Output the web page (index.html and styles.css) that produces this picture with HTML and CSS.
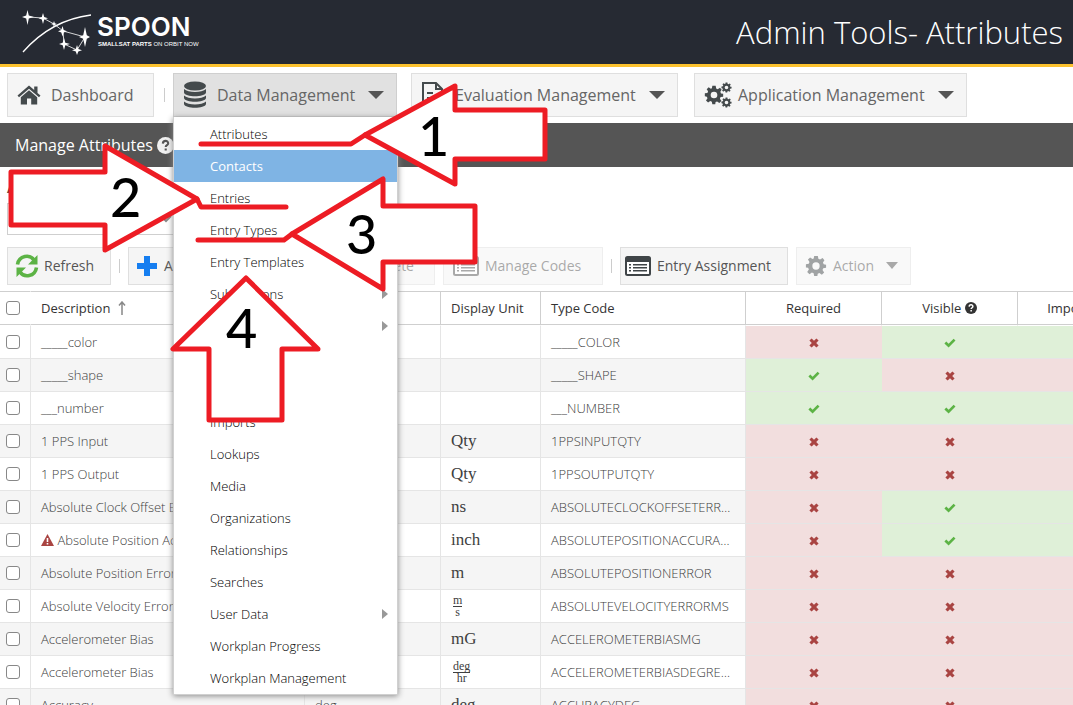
FILE: index.html
```html
<!DOCTYPE html>
<html lang="en">
<head>
<meta charset="utf-8">
<title>Admin Tools- Attributes</title>
<link rel="stylesheet" href="styles.css">
</head>
<body>
<svg class="sprite" aria-hidden="true">
  <symbol id="yes" viewBox="0 0 12 10"><path d="M.4 5.400 2.300 3.500 4.600 5.700 9.600.7 11.500 2.600 4.600 9.400z" fill="#5cb345"/></symbol>
  <symbol id="no" viewBox="0 0 10 10"><path d="M2.600.4 5 2.800 7.400.4 9.600 2.600 7.200 5l2.400 2.400-2.200 2.200L5 7.200 2.600 9.600.4 7.400 2.800 5 .4 2.600z" fill="#a94442"/></symbol>
  <symbol id="list" viewBox="0 0 26 20"><rect x="1" y="1" width="24" height="18" rx="1.5" fill="#fff" stroke="currentColor" stroke-width="2"/><path d="M1 1h24v5H1zM4 8h2v1.5H4zM8 8h14v1.5H8zM4 11h2v1.5H4zM8 11h14v1.5H8zM4 14h2v1.5H4zM8 14h14v1.5H8z" fill="currentColor"/></symbol>
  <symbol id="gear" viewBox="0 0 24 24"><path fill="currentColor" fill-rule="evenodd" d="M10 1h4l.6 3.2 1.8.8L19.200 3.200l2 2.400-1.600 2.600.8 1.900L23 10.500v3.500l-3.100.5-.8 1.900 1.800 2.700-2.500 2.400-2.700-1.800-1.800.8L13.500 23h-3.500l-.6-3-1.900-.8-2.600 1.800-2.500-2.400 1.800-2.700-.8-1.900L1 13.500V10l3.100-.5.8-1.900-1.700-2.600 2.400-2.400L8.200 4.400l1.300-.6zM12 8a4 4 0 1 0 0 8 4 4 0 0 0 0-8z"/></symbol>
  <symbol id="help" viewBox="0 0 16 16"><circle cx="8" cy="8" r="8" fill="currentColor"/><path d="M5.500 6.200C5.700 2.800 10.600 3 10.500 6c0 1.600-2.300 1.700-2.300 3.400M8.200 10.800v2" fill="none" stroke="var(--mark)" stroke-width="2"/></symbol>
</svg>
<div class="app">
  <header class="masthead">
    <svg class="logo" viewBox="0 0 180 48" role="img" aria-label="SPOON">
      <g fill="none" stroke="#fff"><path d="M3 44Q31 12 71 7" stroke-width="1.300"/><path d="M8 9l15 1 11 6 9 7 22 6-8 13-13-6-1-13" stroke-width=".8"/></g>
      <g fill="#fff"><path d="m7.500 2 1.300 5.500L14 9l-5.200 1.500L7.500 17l-1.300-6.500L2 9l4.200-1.500z"/><path d="m23 5 1.200 4L28 10.200l-3.800 1.300L23 16l-1.200-4.500-3.300-1.300L21.800 9z"/><path d="m34 13 .8 2.200 2.200.8-2.200.8L34 19l-.8-2.200-2.200-.8 2.200-.8z"/><path d="m42.500 18 1.200 4 3.300 1.200-3.300 1.200-1.200 4-1.200-4-3.300-1.200 3.300-1.200z"/><path d="m65 19 1.800 8.200L70 29l-3.200 1.800L65 39l-1.800-8.200L59 29l4.200-1.800z"/><path d="m44 30 1.300 4.800L50 36l-4.700 1.300L44 42l-1.300-4.700L39 36l3.700-1.200z"/><path d="m57 37 1.300 4 3.700 1.200-3.700 1.200L57 47l-1.200-3.600-3.800-1.200 3.800-1.200z"/></g>
      <text class="logo-name" x="77" y="28">SPOON</text>
      <text class="logo-tag" x="78" y="38"><tspan class="strong">SMALLSAT PARTS</tspan> ON ORBIT NOW</text>
    </svg>
    <h1 class="page-title">Admin Tools- Attributes</h1>
  </header>

  <nav class="nav">
    <button class="btn nav-home"><svg width="24" height="22" viewBox="0 0 24 22"><path d="M12 1.500 0.500 11.500 2 13.200 12 4.800l10 8.400 1.500-1.700L20.500 9V2.500h-3.300v3.400z" fill="#444a4c"/><path d="M3.800 13.200 12 6.300l8.200 6.900V20.500h-6v-6H10v6H3.800z" fill="#444a4c"/></svg>Dashboard</button>
    <span class="sep"></span>
    <div class="dropdown">
      <button class="btn nav-data pressed"><svg width="24" height="28" viewBox="0 0 24 28" fill="#444a4c"><ellipse cx="12" cy="5" rx="11" ry="4.500"/><path d="M1 8c4 4 18 4 22 0v3.500c-1 5-21 5-22 0zM1 14.500c4 4 18 4 22 0V17c-1 5-21 5-22 0zM1 20.500c4 4 18 4 22 0V23c-1 5-21 5-22 0z"/></svg>Data Management<i class="caret"></i></button>
      <ul class="menu">
        <li><a href="#">Attributes</a></li>
        <li><a href="#" class="active">Contacts</a></li>
        <li><a href="#">Entries</a></li>
        <li><a href="#">Entry Types</a></li>
        <li><a href="#">Entry Templates</a></li>
        <li class="more"><a href="#">Submissions</a></li>
        <li class="more"></li>
        <li></li>
        <li></li>
        <li><a href="#">Imports</a></li>
        <li><a href="#">Lookups</a></li>
        <li><a href="#">Media</a></li>
        <li><a href="#">Organizations</a></li>
        <li><a href="#">Relationships</a></li>
        <li><a href="#">Searches</a></li>
        <li class="more"><a href="#">User Data</a></li>
        <li><a href="#">Workplan Progress</a></li>
        <li><a href="#">Workplan Management</a></li>
      </ul>
    </div>
    <button class="btn nav-eval"><svg width="24" height="28" viewBox="0 0 24 28" fill="none" stroke="#444a4c" stroke-width="2"><path d="M2 2h13l6 6v18H2zM15 2v6h6M6 12h6M6 17h11M6 21h11"/></svg>Evaluation Management<i class="caret"></i></button>
    <button class="btn nav-app"><svg width="28" height="28" viewBox="0 0 28 28" color="#444a4c"><use href="#gear" x="0" y="4" width="20" height="20"/><use href="#gear" x="17" y="1" width="11" height="11"/><use href="#gear" x="17" y="16" width="11" height="11"/></svg>Application Management<i class="caret"></i></button>
  </nav>

  <div class="section-bar"><h2>Manage Attributes</h2><svg class="help-large" width="17" height="17"><use href="#help"/></svg></div>

  <div class="filter">
    <label for="type">A</label>
    <div class="combo"><input id="type" type="text"><svg width="12" height="8" viewBox="0 0 12 8"><path d="m1 1 5 5 5-5" fill="none" stroke="#888" stroke-width="2"/></svg></div>
  </div>

  <div class="toolbar">
    <div class="tools">
      <button class="btn tool-refresh"><svg width="24" height="24" viewBox="0 0 24 24"><path d="M2.500 10.500C4 1 15 0 19 6M21.500 13.500C20 23 9 24 5 18" fill="none" stroke="#5cb345" stroke-width="3.600"/><path d="M22.500 1v9.500H13zM1.500 23v-9.500H11z" fill="#5cb345"/></svg>Refresh</button>
      <span class="sep"></span>
      <button class="btn tool-add"><svg width="20" height="20" viewBox="0 0 20 20"><path d="M7 0h6v7h7v6h-7v7H7v-7H0V7h7z" fill="#167ef0"/></svg>Add</button>
      <button class="btn tool-delete" disabled>Delete</button>
    </div>
    <button class="btn tool-codes" disabled><svg width="26" height="20" color="#555"><use href="#list"/></svg>Manage Codes</button>
    <span class="sep"></span>
    <button class="btn tool-entry"><svg width="26" height="20" color="#3f4447"><use href="#list"/></svg>Entry Assignment</button>
    <button class="btn tool-action" disabled><svg width="22" height="22" color="#444a4c"><use href="#gear"/></svg>Action<i class="caret"></i></button>
  </div>

  <table class="grid">
    <colgroup><col class="c-check"><col class="c-desc"><col class="c-unit"><col class="c-display"><col class="c-code"><col class="c-flag"><col class="c-flag"><col class="c-flag"></colgroup>
    <thead><tr>
      <th class="check"><input type="checkbox" aria-label="Select all"></th>
      <th>Description <svg class="sort" width="8" height="14" viewBox="0 0 8 14"><path d="M4 14V2M1 4.500 4 1l3 3.500" fill="none" stroke="#888" stroke-width="1.500"/></svg></th>
      <th></th><th>Display Unit</th><th>Type Code</th><th class="mid">Required</th>
      <th class="mid">Visible <svg class="help-small" width="12" height="12"><use href="#help"/></svg></th>
      <th class="mid">Important <svg class="help-small" width="12" height="12"><use href="#help"/></svg></th>
    </tr></thead>
    <tbody>
      <tr><td class="check"><input type="checkbox" aria-label="_____color"></td><td>_____color</td><td></td><td></td><td>_____COLOR</td><td class="bad"><svg><use href="#no"/></svg></td><td class="good"><svg><use href="#yes"/></svg></td><td class="good"></td></tr>
      <tr><td class="check"><input type="checkbox" aria-label="_____shape"></td><td>_____shape</td><td></td><td></td><td>_____SHAPE</td><td class="good"><svg><use href="#yes"/></svg></td><td class="bad"><svg><use href="#no"/></svg></td><td class="bad"></td></tr>
      <tr><td class="check"><input type="checkbox" aria-label="___number"></td><td>___number</td><td></td><td></td><td>___NUMBER</td><td class="good"><svg><use href="#yes"/></svg></td><td class="good"><svg><use href="#yes"/></svg></td><td class="good"></td></tr>
      <tr><td class="check"><input type="checkbox" aria-label="1 PPS Input"></td><td>1 PPS Input</td><td></td><td class="unit">Qty</td><td>1PPSINPUTQTY</td><td class="bad"><svg><use href="#no"/></svg></td><td class="bad"><svg><use href="#no"/></svg></td><td class="bad"></td></tr>
      <tr><td class="check"><input type="checkbox" aria-label="1 PPS Output"></td><td>1 PPS Output</td><td></td><td class="unit">Qty</td><td>1PPSOUTPUTQTY</td><td class="bad"><svg><use href="#no"/></svg></td><td class="bad"><svg><use href="#no"/></svg></td><td class="bad"></td></tr>
      <tr><td class="check"><input type="checkbox" aria-label="Absolute Clock Offset Error"></td><td>Absolute Clock Offset Error</td><td></td><td class="unit">ns</td><td>ABSOLUTECLOCKOFFSETERROR</td><td class="bad"><svg><use href="#no"/></svg></td><td class="good"><svg><use href="#yes"/></svg></td><td class="good"></td></tr>
      <tr><td class="check"><input type="checkbox" aria-label="Absolute Position Accuracy"></td><td><svg class="warn" width="13" height="12" viewBox="0 0 13 12"><path d="M6.500 0 13 12H0z" fill="#a94442"/><path d="M6.500 4v4M6.500 9v1.600" stroke="#fff" stroke-width="1.600"/></svg> Absolute Position Accuracy</td><td></td><td class="unit">inch</td><td>ABSOLUTEPOSITIONACCURACY</td><td class="bad"><svg><use href="#no"/></svg></td><td class="good"><svg><use href="#yes"/></svg></td><td class="good"></td></tr>
      <tr><td class="check"><input type="checkbox" aria-label="Absolute Position Error"></td><td>Absolute Position Error</td><td></td><td class="unit">m</td><td>ABSOLUTEPOSITIONERROR</td><td class="bad"><svg><use href="#no"/></svg></td><td class="bad"><svg><use href="#no"/></svg></td><td class="bad"></td></tr>
      <tr><td class="check"><input type="checkbox" aria-label="Absolute Velocity Error"></td><td>Absolute Velocity Error</td><td></td><td class="unit"><span class="frac"><span>m</span><span>s</span></span></td><td>ABSOLUTEVELOCITYERRORMS</td><td class="bad"><svg><use href="#no"/></svg></td><td class="bad"><svg><use href="#no"/></svg></td><td class="bad"></td></tr>
      <tr><td class="check"><input type="checkbox" aria-label="Accelerometer Bias"></td><td>Accelerometer Bias</td><td></td><td class="unit">mG</td><td>ACCELEROMETERBIASMG</td><td class="bad"><svg><use href="#no"/></svg></td><td class="bad"><svg><use href="#no"/></svg></td><td class="bad"></td></tr>
      <tr><td class="check"><input type="checkbox" aria-label="Accelerometer Bias"></td><td>Accelerometer Bias</td><td></td><td class="unit"><span class="frac"><span>deg</span><span>hr</span></span></td><td>ACCELEROMETERBIASDEGREESPERHOUR</td><td class="bad"><svg><use href="#no"/></svg></td><td class="bad"><svg><use href="#no"/></svg></td><td class="bad"></td></tr>
      <tr><td class="check"><input type="checkbox" aria-label="Accuracy"></td><td>Accuracy</td><td>deg</td><td class="unit">deg</td><td>ACCURACYDEG</td><td class="bad"><svg><use href="#no"/></svg></td><td class="bad"><svg><use href="#no"/></svg></td><td class="bad"></td></tr>
    </tbody>
  </table>

  <svg class="callouts" width="560" height="440" viewBox="0 0 560 440">
    <g class="arrows">
      <path d="M365 135 455 86V110H545V159H455V184z"/>
      <path d="M197 199 105 146V172H11V225H105V250z"/>
      <path d="M292 234 383 179V206H475V262H383V289z"/>
      <path d="M246 278 173 349H209V420H282V349H318z"/>
    </g>
    <g class="lines"><path d="M201 144H351L365 135M197 199 201 207H286M198 240H284L292 234"/></g>
    <g class="digits"><text x="418" y="156">1</text><text x="110" y="217">2</text><text x="346" y="254">3</text><text x="226" y="348">4</text></g>
  </svg>
</div>
</body>
</html>
```
FILE: styles.css
```css
* { box-sizing: border-box; }
body { margin: 0; background: #fff; font-family: "Open Sans", sans-serif; font-size: 13px; color: #404040; }
button, input { font: inherit; }
.sprite { position: absolute; width: 0; height: 0; }
.app { position: relative; height: 100vh; overflow: hidden; }

.masthead { display: flex; align-items: center; justify-content: space-between; height: 67px; padding: 0 10px 0 20px; background: #262a33; border-bottom: 3px solid #fcc22f; }
.logo { width: 180px; height: 48px; }
.logo-name { font: 600 26px Inter, sans-serif; fill: #fff; }
.logo-tag { font: 6px "Liberation Sans Narrow", "Liberation Sans", sans-serif; fill: #fff; }
.logo-tag .strong { font-weight: 700; }
.page-title { margin: 0; font-size: 31px; font-weight: 300; line-height: 40px; color: #fff; }

.btn { display: flex; align-items: center; gap: 6px; height: 38px; padding: 0 16px 1px 7px; border: 1px solid #dfdfdf; border-radius: 0; background: #f5f5f5; color: #555; font-size: 14px; white-space: nowrap; }
.btn:disabled { opacity: .5; }
.btn svg { flex: none; }
.caret { border: 6px solid transparent; border-top: 7px solid #555; border-bottom: 0; }
.sep { width: 1px; height: 14px; background: #ccc; }

.nav { display: flex; align-items: center; padding: 6px 7px; }
.nav .btn { height: 44px; padding: 0 13px 0 9px; gap: 10px; font-size: 16px; color: #666; }
.nav .caret { border-width: 8px 8px 0; margin-left: 3px; }
.nav .nav-home { width: 147px; margin-right: 10px; }
.dropdown { position: relative; margin: 0 14px 0 8px; }
.nav .nav-data { width: 224px; }
.nav .pressed { background: #e1e1e1; border-color: #cfcfcf; }
.nav .nav-eval { width: 267px; margin-right: 16px; }
.nav .nav-app { width: 273px; gap: 6px; }
.nav .nav-app .caret { margin-left: 7px; }

.menu { position: absolute; top: 100%; left: 0; z-index: 2; width: 225px; margin: 0; padding: 1px 0 0; list-style: none; background: #fff; border: 1px solid #d0d0d0; border-top: 0; box-shadow: 0 1px 6px #888; }
.menu li { position: relative; height: 32px; }
.menu a { display: block; padding-left: 36px; line-height: 32px; color: #000; font-weight: 300; text-decoration: none; }
.menu .active { background: #7fb4e4; color: #fff; font-weight: 500; }
.more::after { content: ""; position: absolute; right: 9px; top: 11px; border: 5px solid transparent; border-left: 6px solid #999; border-right: 0; }

.section-bar { display: flex; align-items: center; gap: 4px; height: 44px; padding: 0 15px; background: #555; color: #fff; }
.section-bar h2 { margin: 0; font-size: 16px; font-weight: 400; }
.help-large { --mark: #555; color: #f0f0f0; }
.help-small { --mark: #fff; color: #333; vertical-align: -1px; }

.filter { padding: 11px 7px 0; }
.filter label { display: block; height: 20px; margin-bottom: 5px; line-height: 20px; font-weight: 700; }
.combo { display: flex; align-items: center; width: 180px; height: 32px; padding-right: 14px; border: 1px solid #cfcfcf; }
.combo input { flex: 1; min-width: 0; height: 100%; border: 0; }

.toolbar { display: flex; align-items: center; gap: 8px; padding: 12px 7px 6px; }
.tools { display: flex; align-items: center; gap: 8px; width: 428px; }
.tool-refresh { width: 104px; gap: 5px; }
.tool-add { padding-left: 8px; gap: 7px; }
.tool-delete { width: 90px; margin-left: auto; padding-right: 20px; justify-content: flex-end; }
.tool-codes { width: 160px; padding-left: 9px; }
.tool-entry { width: 168px; padding-left: 4px; }
.tool-action { width: 115px; padding-left: 8px; }
.toolbar .caret { margin-left: 6px; }

.grid { width: 1154px; table-layout: fixed; border-collapse: separate; border-spacing: 0; }
.c-check { width: 31px; }
.c-desc { width: 274px; }
.c-unit, .c-flag { width: 136px; }
.c-display { width: 100px; }
.c-code { width: 205px; }
.grid th { height: 34px; padding: 0 10px; text-align: left; font-weight: 400; border: solid #cfcfcf; border-width: 1px 1px 1px 0; color: #333; }
.grid th.check, .grid th:nth-child(2) { border-right-color: #fff; }
.grid td { height: 33px; padding: 0 10px; font-weight: 300; border: solid #e5e5e5; border-width: 0 1px 1px 0; overflow: hidden; white-space: nowrap; text-overflow: ellipsis; }
.grid tbody tr:nth-child(even) { background: #f5f5f5; }
.grid tbody tr:first-child td { height: 34px; border-top: 1px solid #fff; }
.grid .check { padding: 0 0 0 6px; }
.grid input { display: block; appearance: none; width: 14px; height: 14px; margin: 0; border: 1px solid #888; border-radius: 3px; background: #fff; }
.grid .mid, .grid .good, .grid .bad { text-align: center; }
.grid .good { background: #dff0d8; border-right-color: #dff0d8; }
.grid .bad { background: #f2dede; border-right-color: #f2dede; }
.good svg { width: 12px; height: 10px; vertical-align: -1px; }
.bad svg { width: 10px; height: 10px; vertical-align: -1px; }
.sort { margin-left: 4px; vertical-align: -2px; }
.warn { vertical-align: -1px; }
.grid .unit { font-family: "Liberation Serif", serif; font-size: 17px; font-weight: 400; }
.frac { display: inline-flex; flex-direction: column; align-items: center; margin-left: 2px; font-size: 12px; line-height: 11px; vertical-align: middle; }
.frac span:first-child { align-self: stretch; text-align: center; border-bottom: 1px solid #404040; }

.callouts { position: absolute; top: 0; left: 0; z-index: 3; pointer-events: none; }
.arrows { fill: #fff; stroke: #ed1c24; stroke-width: 5px; stroke-linejoin: round; }
.lines { fill: none; stroke: #ed1c24; stroke-width: 5px; stroke-linecap: round; stroke-linejoin: round; }
.digits { font: 500 54px Lato, sans-serif; fill: #000; }
```
